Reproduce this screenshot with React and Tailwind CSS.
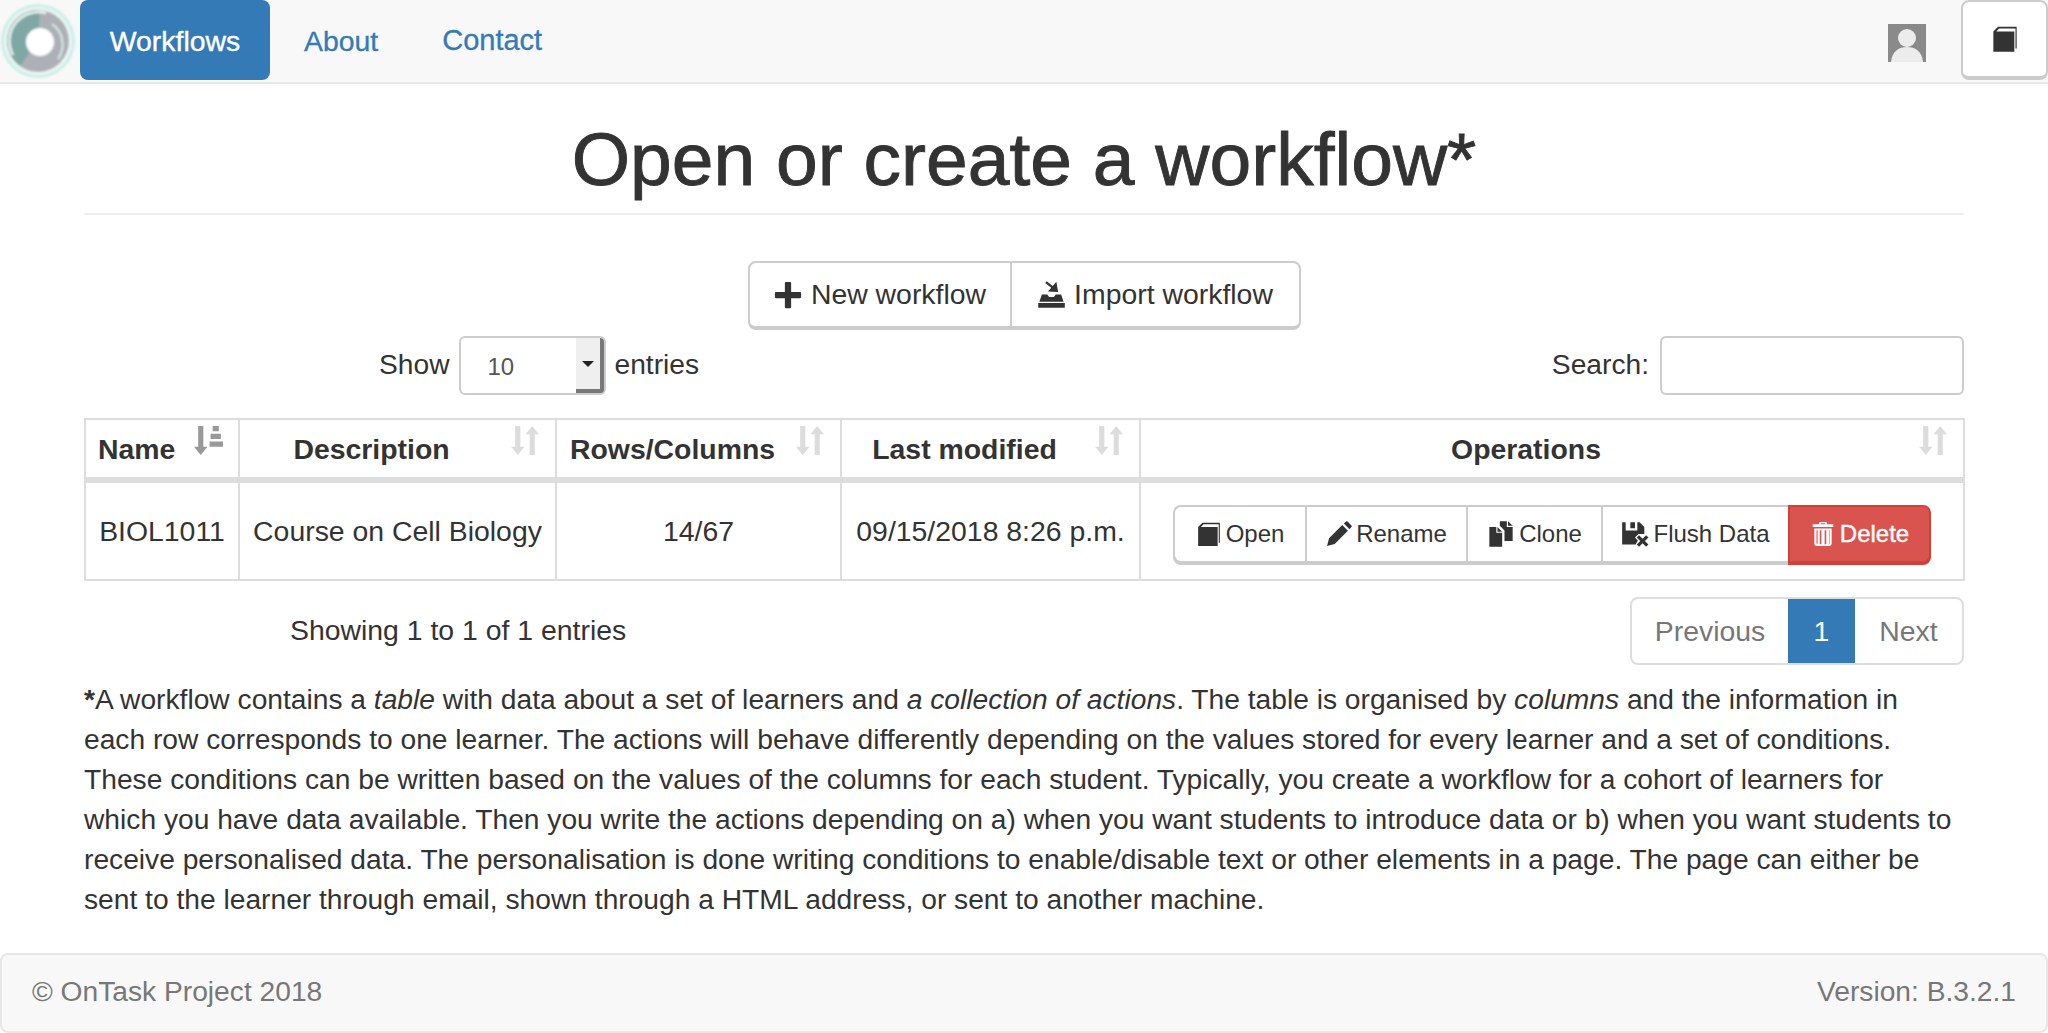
const fontStack = "font-['Liberation_Sans','Helvetica_Neue',Arial,sans-serif]";

function Logo() {
  return (
    <svg className="h-[78px] w-[78px] shrink-0" viewBox="0 0 78 78">
      <defs>
        <filter id="soft" x="-20%" y="-20%" width="140%" height="140%">
          <feGaussianBlur stdDeviation="0.9" />
        </filter>
      </defs>
      <g filter="url(#soft)">
        <circle cx="38" cy="40" r="37" fill="#c9efe6" />
        <circle cx="38" cy="40" r="34" fill="#eef7f5" />
        <circle cx="38" cy="40" r="31" fill="#adb0b6" />
        <path d="M40 9 A31 31 0 0 0 20 65 L38 40 Z" fill="#7fa8a4" />
        <path d="M13 54 A29 29 0 0 1 46 12" fill="none" stroke="#e8f5f2" strokeWidth="2.5" />
        <path d="M52 23 A25 25 0 0 1 58 58" fill="none" stroke="#d3efe8" strokeWidth="2" />
        <circle cx="40" cy="41" r="14" fill="#ffffff" />
      </g>
    </svg>
  );
}

function Book({ className }) {
  return (
    <svg className={className} viewBox="0 0 24 24" fill="currentColor">
      <path d="M2 5.500 6 1.500h16v18.600h-1V3H7L4.500 5.500H20V23H2z" />
    </svg>
  );
}

function Plus({ className }) {
  return (
    <svg className={className} viewBox="0 0 24 24" fill="currentColor">
      <path d="M9.500 2.500a1 1 0 0 1 1-1h3a1 1 0 0 1 1 1v7h7a1 1 0 0 1 1 1v3a1 1 0 0 1-1 1h-7v7a1 1 0 0 1-1 1h-3a1 1 0 0 1-1-1v-7h-7a1 1 0 0 1-1-1v-3a1 1 0 0 1 1-1h7z" />
    </svg>
  );
}

function ImportIcon({ className }) {
  return (
    <svg className={className} viewBox="0 0 24 24" fill="currentColor">
      <path d="M8 1l5 4 3-3.500 1.500 8.500-8.500-.5 2.800-3-5-4zM1 19h22v4H1zM4 12h4.500l1.500 2h4l1.500-2H20l2 6H2z" />
    </svg>
  );
}

function Pencil({ className }) {
  return (
    <svg className={className} viewBox="0 0 24 24" fill="currentColor">
      <path d="M1 23l1.800-7L15 3.800l5.200 5.200L8 21.200zM16.500 2.300L18.500.5a1 1 0 0 1 1.400 0l3.600 3.600a1 1 0 0 1 0 1.400l-1.800 2z" />
    </svg>
  );
}

function Clone({ className }) {
  return (
    <svg className={className} viewBox="0 0 24 24" fill="currentColor">
      <path d="M2 6h6v5h5v12H2zM9 6l4 4H9zM11 1h6v5h5v12h-7V9l-4-4zM18 1l4 4h-4z" />
    </svg>
  );
}

function FloppyX({ className }) {
  return (
    <svg className={className} viewBox="0 0 24 24" fill="currentColor">
      <path d="M1 2h3v7h10V2h2l4 4v6h-5l-3 3 2.500 2.500L12.500 21H1zM8 2h4v5H8z" />
      <path d="M15.500 13l3 3 3-3 2 2-3 3 3 3-2 2-3-3-3 3-2-2 3-3-3-3z" />
    </svg>
  );
}

function Trash({ className }) {
  return (
    <svg className={className} viewBox="0 0 24 24" fill="currentColor">
      <path d="M8.500 3V1h7v2h6v2.500h-19V3zM10 2v1h4V2zM4 7h16v14a2 2 0 0 1-2 2H6a2 2 0 0 1-2-2zm2 1.500V20a1.500 1.500 0 0 0 1 1.500V8.500zm3 0v13h1.500v-13zm4.500 0v13H15v-13zM17.500 8.500v13a1.500 1.500 0 0 0 .5-1.500V8.500z" fillRule="evenodd" />
    </svg>
  );
}

function SortIcon({ active }) {
  if (active) {
    return (
      <svg className="absolute right-[14px] top-[5px] h-[31px] w-[31px] text-[#999]" viewBox="0 0 30 30" fill="currentColor">
        <path d="M5 1h5v20h4l-6.500 8L1 21h4zM19 1h6v5h-6zM17 8.500h10v5H17zM16 16h13v5H16z" />
      </svg>
    );
  }
  return (
    <svg className="absolute right-[14px] top-[5px] h-[31px] w-[31px] text-[#dcdcdc]" viewBox="0 0 30 30" fill="currentColor">
      <path d="M5 1h5v20h4l-6.500 8L1 21h4zM21.500 1l6.500 8h-4v20h-5V9h-4z" />
    </svg>
  );
}

function HeaderCell({ children, active, className = 'pl-[10px] pr-[62px] text-center' }) {
  return (
    <th className={`relative h-[61px] border-2 border-b-[6px] border-[#ddd] pt-[2px] text-[28.4px] leading-none font-bold ${className}`}>
      {children}
      <SortIcon active={active} />
    </th>
  );
}

function RowButton({ icon, label, className }) {
  return (
    <button className={`flex h-[58px] items-center justify-center gap-[4px] border-y-2 border-l-2 border-[#ccc] bg-white text-[24px] text-[#333] shadow-[0_2px_0_#ccc] ${className}`}>
      {icon}
      {label}
    </button>
  );
}

export default function App() {
  return (
    <div className={`min-h-screen bg-white text-[28.2px] text-[#333] ${fontStack}`}>
      {/* navbar */}
      <nav className="flex h-[84px] items-start border-b-2 border-[#e7e7e7] bg-[#f8f8f8] text-[28.4px]">
        <div className="mt-[1px] w-[80px]">
          <Logo />
        </div>
        <a className="flex h-[80px] w-[190px] items-center justify-center rounded-[8px] bg-[#337ab7] pt-[2px] text-white [-webkit-text-stroke:0.4px_#fff]">Workflows</a>
        <a className="ml-[34px] flex h-[80px] items-center pt-[2px] text-[#337ab7] [-webkit-text-stroke:0.3px_#337ab7]">About</a>
        <a className="ml-[64px] flex h-[80px] items-center pt-[2px] text-[29px] text-[#337ab7] [-webkit-text-stroke:0.3px_#337ab7]">Contact</a>
        <div className="ml-auto mt-[24px] h-[38px] w-[38px] overflow-hidden">
          <svg className="h-full w-full" viewBox="0 0 38 38">
            <rect width="38" height="38" fill="#8a8a8a" />
            <circle cx="19" cy="14" r="9" fill="#ececec" />
            <path d="M3 38c1-11 8-15 16-15s15 4 16 15z" fill="#ececec" />
          </svg>
        </div>
        <button className="ml-[35px] flex h-[80px] w-[87px] items-center justify-center rounded-[8px] border-2 border-b-4 border-[#ccc] bg-white text-[#333]">
          <Book className="h-[28px] w-[28px]" />
        </button>
      </nav>

      <main className="px-[84px]">
        <h1 className="mt-[36px] border-b-2 border-[#eee] pb-[14px] text-center text-[75px] leading-[79px] font-normal [-webkit-text-stroke:0.9px_#333]">
          Open or create a workflow*
        </h1>

        <div className="mt-[46px] flex justify-center">
          <div className="flex h-[69px] rounded-[8px] border-2 border-b-4 border-[#ccc] bg-white text-[28.4px]">
            <button className="flex w-[262px] items-center justify-center gap-[8px] border-r-2 border-[#ccc]">
              <Plus className="h-[30px] w-[30px]" />
              New workflow
            </button>
            <button className="flex w-[287px] items-center justify-center gap-[8px]">
              <ImportIcon className="h-[29px] w-[29px]" />
              Import workflow
            </button>
          </div>
        </div>

        {/* table controls */}
        <div className="mt-[6px] flex h-[59px] items-center">
          <div className="ml-[295px] flex items-center">
            <span className="pb-[3px]">Show</span>
            <div className="ml-[9px] flex h-[59px] w-[147px] overflow-hidden rounded-[6px] border-2 border-[#ccc]">
              <span className="flex flex-1 items-center pl-[27px] pt-[2px] text-[24px] text-[#555]">10</span>
              <span className="flex w-[28px] items-center justify-center border-r-[4px] border-b-[4px] border-[#777] bg-[#efefef]">
                <span className="h-0 w-0 border-x-[6px] border-t-[6px] border-x-transparent border-t-[#222]" />
              </span>
            </div>
            <span className="ml-[9px] pb-[3px]">entries</span>
          </div>
          <div className="ml-auto flex items-center">
            <span className="pb-[3px]">Search:</span>
            <input className="ml-[11px] h-[59px] w-[304px] rounded-[6px] border-2 border-[#ccc] bg-white" />
          </div>
        </div>

        {/* workflows table */}
        <table className="mt-[23px] w-[1879px] table-fixed border-collapse">
          <colgroup>
            <col className="w-[154px]" />
            <col className="w-[317px]" />
            <col className="w-[285px]" />
            <col className="w-[299px]" />
            <col className="w-[824px]" />
          </colgroup>
          <thead>
            <tr>
              <HeaderCell active className="pl-[12px] pr-[40px] text-left">Name</HeaderCell>
              <HeaderCell>Description</HeaderCell>
              <HeaderCell>Rows/Columns</HeaderCell>
              <HeaderCell>Last modified</HeaderCell>
              <HeaderCell>Operations</HeaderCell>
            </tr>
          </thead>
          <tbody>
            <tr className="h-[100px] text-center text-[28.4px]">
              <td className="border-2 border-[#ddd]">BIOL1011</td>
              <td className="border-2 border-[#ddd] whitespace-nowrap">Course on Cell Biology</td>
              <td className="border-2 border-[#ddd]">14/67</td>
              <td className="border-2 border-[#ddd] whitespace-nowrap">09/15/2018 8:26 p.m.</td>
              <td className="border-2 border-[#ddd]">
                <div className="ml-[32px] mt-[5px] flex">
                  <RowButton
                    className="w-[132px] rounded-l-[8px]"
                    icon={<Book className="h-[26px] w-[26px]" />}
                    label="Open"
                  />
                  <RowButton
                    className="w-[161px]"
                    icon={<Pencil className="h-[26px] w-[26px]" />}
                    label="Rename"
                  />
                  <RowButton
                    className="w-[135px]"
                    icon={<Clone className="h-[28px] w-[28px]" />}
                    label="Clone"
                  />
                  <RowButton
                    className="w-[187px]"
                    icon={<FloppyX className="h-[28px] w-[28px]" />}
                    label="Flush Data"
                  />
                  <button className="flex h-[58px] w-[143px] items-center justify-center gap-[4px] rounded-r-[8px] border-2 border-[#d43f3a] bg-[#d9534f] text-[24px] text-white shadow-[0_2px_0_#d43f3a] [-webkit-text-stroke:0.4px_#fff]">
                    <Trash className="h-[26px] w-[26px]" />
                    Delete
                  </button>
                </div>
              </td>
            </tr>
          </tbody>
        </table>

        {/* info and pagination */}
        <div className="mt-[16px] flex h-[68px] items-center text-[28.4px]">
          <span className="ml-[206px] pb-[2px]">Showing 1 to 1 of 1 entries</span>
          <div className="ml-auto flex h-[68px] overflow-hidden rounded-[8px] border-2 border-[#ddd] text-[#777]">
            <span className="flex w-[156px] items-center justify-center">Previous</span>
            <span className="-my-[2px] flex w-[67px] items-center justify-center bg-[#337ab7] text-white">1</span>
            <span className="flex w-[107px] items-center justify-center">Next</span>
          </div>
        </div>

        <p className="mt-[14px] pr-[4px] leading-[40px]">
          <b>*</b>A workflow contains a <i>table</i> with data about a set of learners and <i>a collection of actions</i>. The table is organised by <i>columns</i> and the information in each row corresponds to one learner. The actions will behave differently depending on the values stored for every learner and a set of conditions. These conditions can be written based on the values of the columns for each student. Typically, you create a workflow for a cohort of learners for which you have data available. Then you write the actions depending on a) when you want students to introduce data or b) when you want students to receive personalised data. The personalisation is done writing conditions to enable/disable text or other elements in a page. The page can either be sent to the learner through email, shown through a HTML address, or sent to another machine.
        </p>
      </main>

      <footer className="mt-[34px] flex h-[80px] items-center justify-between rounded-[8px] border-2 border-[#e7e7e7] bg-[#f8f8f8] pb-[3px] pl-[30px] pr-[30px] text-[#777]">
        <span>© OnTask Project 2018</span>
        <span>Version: B.3.2.1</span>
      </footer>
    </div>
  );
}
